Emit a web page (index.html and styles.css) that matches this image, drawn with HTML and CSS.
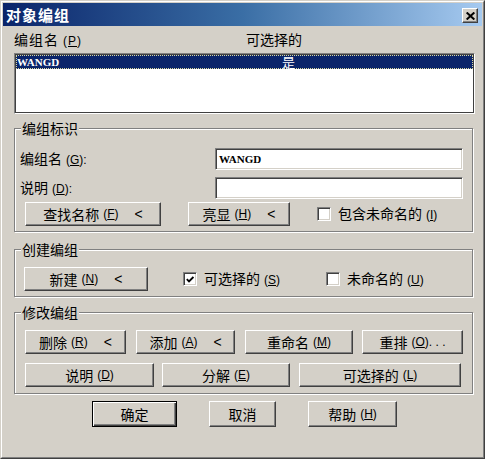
FILE: index.html
```html
<!DOCTYPE html>
<html lang="zh-CN">
<head>
<meta charset="utf-8">
<title>对象编组</title>
<link rel="stylesheet" href="styles.css">
</head>
<body>
<div class="window">
  <div class="frame">
    <div class="titlebar">
      <span class="title">对象编组</span>
      <span class="close">
        <svg width="9" height="8" viewBox="0 0 9 8"><path d="M0.6 0.5 L8.4 7.5 M8.4 0.5 L0.6 7.5" stroke="#000" stroke-width="2.1" fill="none"/></svg>
      </span>
    </div>
    <div class="body">
      <div class="list-head">
        <span class="hc1">编组名<span class="k">(<u>P</u>)</span></span>
        <span class="hc2">可选择的</span>
      </div>
      <div class="listbox">
        <div class="lrow"><span class="lc1">WANGD</span><span class="lc2">是</span></div>
      </div>

      <div class="group g1">
        <div class="legend">编组标识</div>
        <div class="field">
          <span class="lbl">编组名<span class="k">(<u>G</u>):</span></span>
          <div class="input"><span class="val">WANGD</span></div>
        </div>
        <div class="field field2">
          <span class="lbl">说明<span class="k">(<u>D</u>):</span></span>
          <div class="input"></div>
        </div>
        <div class="btnrow r1">
          <div class="btn w-find">查找名称<span class="k">(<u>F</u>)</span><span class="arr">&lt;</span></div>
          <div class="btn w-hl">亮显<span class="k">(<u>H</u>)</span><span class="arr">&lt;</span></div>
          <div class="chkitem ci-inc"><span class="chk"></span><span class="clbl">包含未命名的<span class="k">(<u>I</u>)</span></span></div>
        </div>
      </div>

      <div class="group g2">
        <div class="legend">创建编组</div>
        <div class="btnrow r2">
          <div class="btn w-new">新建<span class="k">(<u>N</u>)</span><span class="arr">&lt;</span></div>
          <div class="chkitem ci-sel"><span class="chk">
            <svg width="8" height="7" viewBox="0 0 8 7"><path d="M0.8 3.2 L3 5.4 L7.4 1" stroke="#000" stroke-width="1.8" fill="none"/></svg>
          </span><span class="clbl">可选择的<span class="k">(<u>S</u>)</span></span></div>
          <div class="chkitem"><span class="chk"></span><span class="clbl">未命名的<span class="k">(<u>U</u>)</span></span></div>
        </div>
      </div>

      <div class="group g3">
        <div class="legend">修改编组</div>
        <div class="btnrow r3">
          <div class="btn w-del">删除<span class="k">(<u>R</u>)</span><span class="arr">&lt;</span></div>
          <div class="btn w-add">添加<span class="k">(<u>A</u>)</span><span class="arr">&lt;</span></div>
          <div class="btn w-ren">重命名<span class="k">(<u>M</u>)</span></div>
          <div class="btn w-ord">重排<span class="k">(<u>O</u>). . .</span></div>
        </div>
        <div class="btnrow r4">
          <div class="btn w-desc">说明<span class="k">(<u>D</u>)</span></div>
          <div class="btn w-exp">分解<span class="k">(<u>E</u>)</span></div>
          <div class="btn w-selb">可选择的<span class="k">(<u>L</u>)</span></div>
        </div>
      </div>

      <div class="btnrow bottom">
        <div class="btn default w-ok">确定</div>
        <div class="btn w-cancel">取消</div>
        <div class="btn w-help">帮助<span class="k">(<u>H</u>)</span></div>
      </div>
    </div>
  </div>
</div>
</body>
</html>
```

FILE: styles.css
```css
html, body {
  margin: 0;
  padding: 0;
  background: #ffffff;
}

body {
  font-family: "Noto Sans CJK SC", "Noto Sans", sans-serif;
  font-size: 14px;
  line-height: 16px;
  color: #000000;
}

.window {
  width: 485px;
  height: 459px;
  box-sizing: border-box;
  border: 1px solid;
  border-color: #d4d0c8 #404040 #404040 #d4d0c8;
  background: #d4d0c8;
}

.frame {
  height: 100%;
  box-sizing: border-box;
  border: 1px solid;
  border-color: #ffffff #808080 #808080 #ffffff;
  padding: 1px;
}

.titlebar {
  height: 23px;
  display: flex;
  align-items: center;
  justify-content: space-between;
  padding: 0 4px 0 3px;
  background: linear-gradient(to right, #0a246a 0%, #3a6ea5 50%, #a6caf0 100%);
}

.title {
  color: #ffffff;
  font-weight: bold;
  font-size: 15px;
  letter-spacing: 1px;
  line-height: 16px;
}

.close {
  width: 16px;
  height: 15px;
  margin-top: 2px;
  box-sizing: border-box;
  border: 1px solid;
  border-color: #ffffff #404040 #404040 #ffffff;
  box-shadow: inset -1px -1px 0 #808080;
  background: #d4d0c8;
  display: flex;
  align-items: center;
  justify-content: center;
}

.close svg {
  display: block;
}

.body {
  padding-left: 11px;
}

.k {
  font-family: "Liberation Sans", sans-serif;
  font-size: 12px;
  margin-left: 4px;
}

.arr {
  font-family: "Liberation Sans", sans-serif;
  font-size: 14px;
  margin-left: 16px;
}

.list-head {
  display: flex;
  margin-top: 5px;
  height: 16px;
}

.hc1 {
  width: 232px;
  letter-spacing: 1px;
}

.listbox {
  margin-top: 6px;
  width: 461px;
  height: 61px;
  box-sizing: border-box;
  border: 1px solid;
  border-color: #808080 #ffffff #ffffff #808080;
  box-shadow: inset 0 0 0 1px #404040;
  padding: 1px;
  background: #ffffff;
}

.lrow {
  display: flex;
  height: 14px;
  box-sizing: border-box;
  border: 1px dotted #d8d8a0;
  background: #0a246a;
  color: #ffffff;
  font-size: 13px;
  line-height: 12px;
}

.lc1 {
  width: 265px;
  font-family: "Liberation Serif", serif;
  font-weight: bold;
  font-size: 11px;
}

.group {
  width: 459px;
  box-sizing: border-box;
  border: 1px solid #808080;
  box-shadow: 1px 1px 0 #ffffff, inset 1px 1px 0 #ffffff;
}

.g1 {
  margin-top: 14px;
  padding-bottom: 5px;
}

.g2 {
  margin-top: 17px;
  padding-bottom: 5px;
}

.g3 {
  margin-top: 15px;
  padding-bottom: 6px;
}

.legend {
  width: max-content;
  height: 16px;
  margin: -9px 0 0 6px;
  padding: 0 1px;
  background: #d4d0c8;
}

.field {
  display: flex;
  align-items: center;
  height: 22px;
  margin-top: 12px;
  padding: 0 9px 0 5px;
}

.field2 {
  margin-top: 7px;
}

.lbl {
  flex: 1;
}

.input {
  width: 248px;
  height: 22px;
  box-sizing: border-box;
  border: 1px solid;
  border-color: #808080 #ffffff #ffffff #808080;
  box-shadow: inset 1px 1px 0 #404040, inset -1px -1px 0 #d4d0c8;
  background: #ffffff;
  padding: 4px 0 0 3px;
}

.val {
  font-family: "Liberation Serif", serif;
  font-weight: bold;
  font-size: 11px;
  line-height: 12px;
  display: block;
}

.btnrow {
  display: flex;
  align-items: center;
}

.r1 {
  margin-top: 3px;
  padding-left: 10px;
}

.r2 {
  margin-top: 10px;
  padding-left: 9px;
}

.r3 {
  margin-top: 10px;
  padding-left: 10px;
}

.r4 {
  margin-top: 9px;
  padding-left: 10px;
}

.btn {
  height: 24px;
  box-sizing: border-box;
  border: 1px solid;
  border-color: #ffffff #404040 #404040 #ffffff;
  box-shadow: inset -1px -1px 0 #808080, inset 1px 1px 0 #d4d0c8;
  background: #d4d0c8;
  display: flex;
  align-items: center;
  justify-content: center;
  white-space: nowrap;
}

.btn.default {
  border: 1px solid #000000;
  box-shadow: inset 1px 1px 0 #ffffff, inset -1px -1px 0 #404040, inset -2px -2px 0 #808080;
}

.w-find { width: 136px; }
.w-hl { width: 102px; margin-left: 27px; }
.ci-inc { margin-left: 27px; }

.w-new { width: 124px; }
.ci-sel { margin-left: 35px; width: 143px; }

.w-del { width: 101px; }
.w-add { width: 99px; margin-left: 10px; }
.w-ren { width: 108px; margin-left: 10px; }
.w-ord { width: 101px; margin-left: 9px; }

.w-desc { width: 129px; }
.w-exp { width: 128px; margin-left: 8px; }
.w-selb { width: 162px; margin-left: 9px; }

.bottom {
  margin-top: 7px;
  padding-left: 78px;
}

.bottom .btn {
  height: 26px;
}

.w-ok { width: 85px; }
.w-cancel { width: 67px; margin-left: 32px; }
.w-help { width: 89px; margin-left: 32px; }

.chkitem {
  display: flex;
  align-items: center;
}

.chk {
  width: 14px;
  height: 14px;
  box-sizing: border-box;
  border: 1px solid;
  border-color: #808080 #ffffff #ffffff #808080;
  box-shadow: inset 1px 1px 0 #404040, inset -1px -1px 0 #d4d0c8;
  background: #ffffff;
  display: flex;
  align-items: center;
  justify-content: center;
}

.chk svg {
  display: block;
}

.clbl {
  margin-left: 7px;
}
```
